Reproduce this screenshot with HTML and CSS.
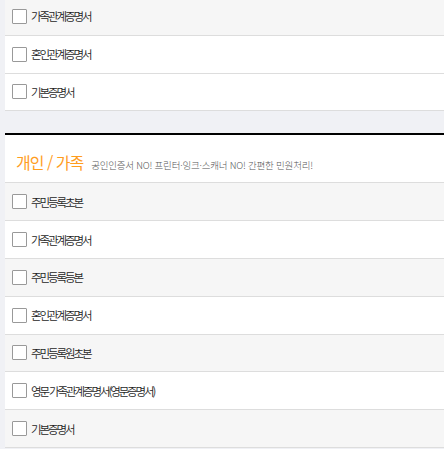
FILE: index.html
```html
<!DOCTYPE html>
<html lang="ko">
<head>
    <meta charset="UTF-8">
    <meta name="viewport" content="width=device-width, initial-scale=1.0">
    <title>민원서류</title>
    <link rel="stylesheet" href="styles.css">
</head>
<body>
    <div class="wrap">
        <ul class="doc-list top-list">
            <li class="gray"><label><span class="chk"></span>가족관계증명서</label></li>
            <li><label><span class="chk"></span>혼인관계증명서</label></li>
            <li><label><span class="chk"></span>기본증명서</label></li>
        </ul>
        <div class="section">
            <div class="section-head">
                <h3>개인 / 가족</h3>
                <p>공인인증서 NO! 프린터·잉크·스캐너 NO! 간편한 민원처리!</p>
            </div>
            <ul class="doc-list">
                <li class="gray"><label><span class="chk"></span>주민등록초본</label></li>
                <li><label><span class="chk"></span>가족관계증명서</label></li>
                <li class="gray"><label><span class="chk"></span>주민등록등본</label></li>
                <li><label><span class="chk"></span>혼인관계증명서</label></li>
                <li class="gray"><label><span class="chk"></span>주민등록원초본</label></li>
                <li><label><span class="chk"></span>영문 가족관계증명서(영문증명서)</label></li>
                <li class="gray"><label><span class="chk"></span>기본증명서</label></li>
            </ul>
        </div>
    </div>
</body>
</html>
```

FILE: styles.css
```css
* { margin: 0; padding: 0; box-sizing: border-box; }
body {
    font-family: "Noto Sans CJK KR", sans-serif;
    background: #f0f1f5;
    color: #333;
    overflow: hidden;
}
.wrap { margin-left: 5px; }
.doc-list { list-style: none; background: #fff; }
.top-list { margin-top: -2px; }
.doc-list li {
    height: 37.8px;
    border-bottom: 1px solid #dddddd;
    display: flex;
    align-items: center;
    padding-left: 7px;
}
.doc-list li.gray { background: #f6f6f6; }
.doc-list label {
    display: flex;
    align-items: center;
    font-size: 11.5px;
    font-weight: 350;
    letter-spacing: -2.1px;
    color: #1e1e1e;
    cursor: pointer;
}
.chk {
    width: 15px;
    height: 15px;
    border: 1px solid #999;
    border-radius: 1px;
    background: #fff;
    margin-right: 4px;
    flex-shrink: 0;
}
.section {
    margin-top: 22px;
    border-top: 2px solid #000;
}
.section-head {
    background: #fff;
    height: 48px;
    border-bottom: 1px solid #dddddd;
    display: flex;
    align-items: baseline;
    padding: 15px 0 0 11px;
}
.section-head h3 {
    font-size: 16px;
    font-weight: normal;
    color: #ff9d1e;
    letter-spacing: -1px;
    margin-right: 8px;
}
.section-head p {
    font-size: 9.5px;
    font-weight: 300;
    color: #555;
    letter-spacing: -0.2px;
}
```
